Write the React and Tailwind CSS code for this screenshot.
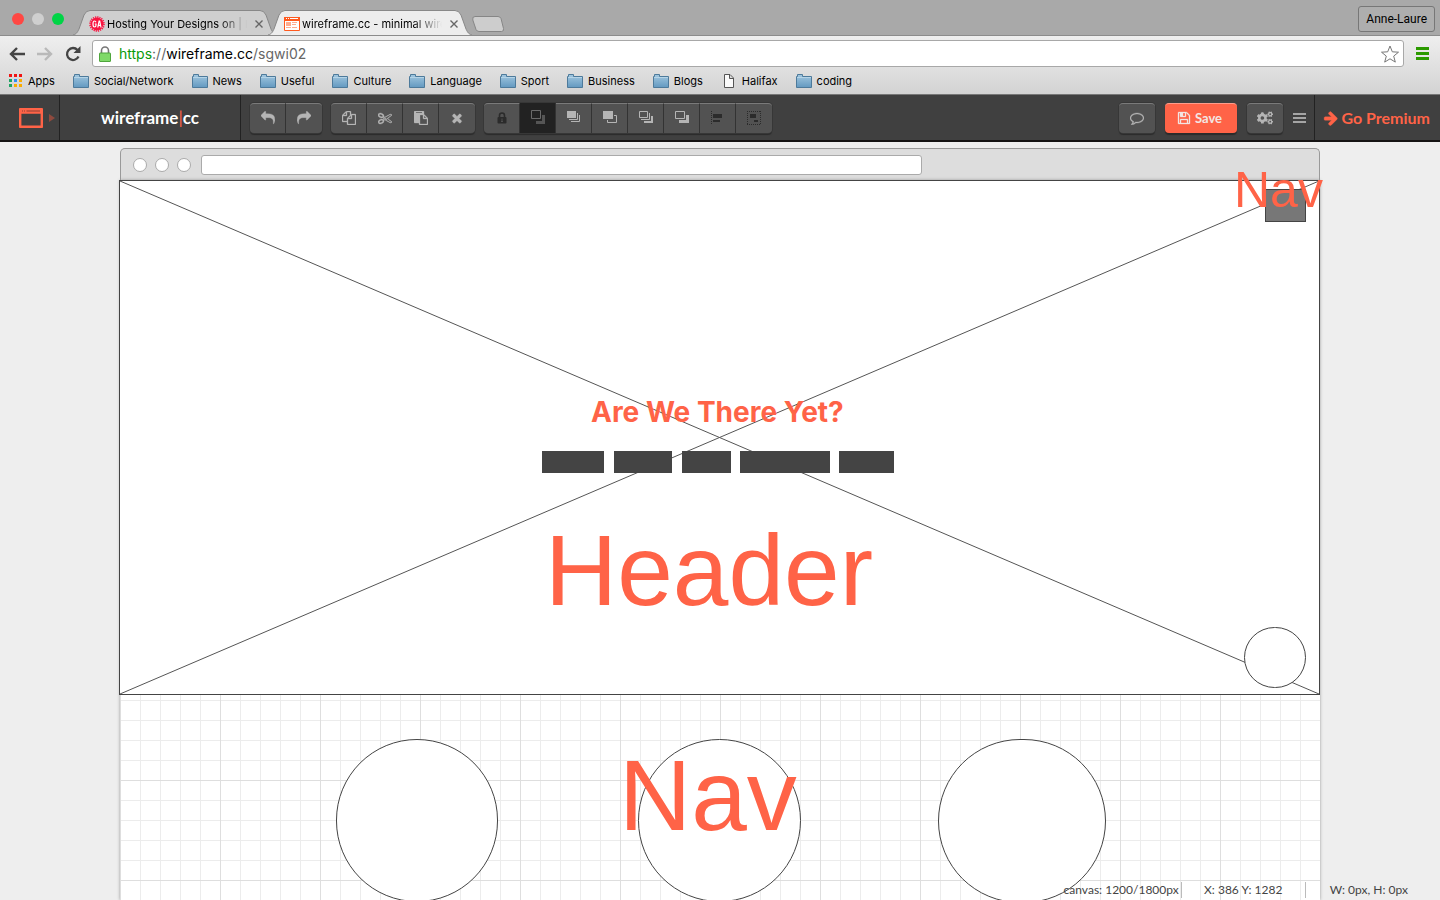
import { FaCogs } from 'react-icons/fa';

const ICONS = {
  reply: 'M1792 1120q0 166-127 451-3 7-10.5 24t-13.5 30-13 22q-12 17-28 17-15 0-23.5-10t-8.5-25q0-9 2.5-26.5t2.5-23.5q5-68 5-123 0-112-19.5-200.5t-54-153.5-89-110-115-74-139-43.5-154.5-20.5-174-5.5h-224v256q0 26-19 45t-45 19-45-19l-512-512q-19-19-19-45t19-45l512-512q19-19 45-19t45 19 19 45v256h224q713 0 875 403 53 134 53 333z',
  arrow: 'M1600 960q0 54-37 91l-651 651q-39 37-91 37-51 0-90-37l-75-75q-38-38-38-91t38-91l293-293h-704q-52 0-84.5-37.5t-32.5-90.5v-128q0-53 32.5-90.5t84.5-37.5h704l-293-294q-38-36-38-90t38-90l75-75q38-38 90-38 53 0 91 38l651 651q37 35 37 90z',
  comment: 'M896 384q-204 0-381.5 69.5t-282 187.5-104.5 255q0 112 71.5 213.5t201.5 175.5l87 50-27 96q-24 91-70 172 152-63 275-171l43-38 57 6q69 8 130 8 204 0 381.5-69.5t282-187.5 104.5-255-104.5-255-282-187.5-381.5-69.5zm896 512q0 174-120 321.5t-326 233-450 85.5q-70 0-145-8-198 175-460 242-49 14-114 22h-5q-15 0-27-10.5t-16-27.5v-1q-3-4-.5-12t2-10 4.5-9.5l6-9 7-8.5 8-9q7-8 31-34.5t34.5-38 31-39.5 32.5-51 27-59 26-76q-157-89-247.5-220t-90.5-281q0-174 120-321.5t326-233 450-85.5 450 85.5 326 233 120 321.5z',
  save: 'M512 1536h768v-384h-768v384zm896 0h128v-896q0-14-10-38.5t-20-34.5l-281-281q-10-10-34-20t-39-10v416q0 40-28 68t-68 28h-576q-40 0-68-28t-28-68v-416h-128v1280h128v-416q0-40 28-68t68-28h832q40 0 68 28t28 68v416zm-384-928v-320q0-13-9.5-22.5t-22.5-9.5h-192q-13 0-22.5 9.5t-9.5 22.5v320q0 13 9.5 22.5t22.5 9.5h192q13 0 22.5-9.5t9.5-22.5zm640 32v928q0 40-28 68t-68 28h-1344q-40 0-68-28t-28-68v-1344q0-40 28-68t68-28h928q40 0 88 20t76 48l280 280q28 28 48 76t20 88z',
  times: 'M1490 1322q0 40-28 68l-136 136q-28 28-68 28t-68-28l-294-294-294 294q-28 28-68 28t-68-28l-136-136q-28-28-28-68t28-68l294-294-294-294q-28-28-28-68t28-68l136-136q28-28 68-28t68 28l294 294 294-294q28-28 68-28t68 28l136 136q28 28 28 68t-28 68l-294 294 294 294q28 28 28 68z',
  copy: 'M1696 384q40 0 68 28t28 68v1216q0 40-28 68t-68 28h-960q-40 0-68-28t-28-68v-288h-544q-40 0-68-28t-28-68v-672q0-40 20-88t48-76l408-408q28-28 76-48t88-20h416q40 0 68 28t28 68v328q68-40 128-40h416zm-544 213l-299 299h299v-299zm-640-384l-299 299h299v-299zm196 647l316-316v-416h-384v416q0 40-28 68t-68 28h-416v640h512v-256q0-40 20-88t48-76zm956 804v-1152h-384v416q0 40-28 68t-68 28h-416v640h896z',
  paste: 'M768 1664h896v-640h-416q-40 0-68-28t-28-68v-416h-384v1152zm256-1440v-64q0-13-9.5-22.5t-22.5-9.5h-704q-13 0-22.5 9.5t-9.5 22.5v64q0 13 9.5 22.5t22.5 9.5h704q13 0 22.5-9.5t9.5-22.5zm256 672h299l-299-299v299zm512 128v672q0 40-28 68t-68 28h-960q-40 0-68-28t-28-68v-160h-544q-40 0-68-28t-28-68v-1344q0-40 28-68t68-28h1088q40 0 68 28t28 68v328q21 13 36 28l408 408q28 28 48 76t20 88z',
  cut: 'M960 896q26 0 45 19t19 45-19 45-45 19-45-19-19-45 19-45 45-19zm300 64l507 398q28 20 25 56-5 35-35 51l-128 64q-13 7-29 7-17 0-31-8l-690-387-110 66q-8 4-12 5 14 49 10 97-7 77-56 147.5t-132 123.5q-132 84-277 84-136 0-222-78-90-84-79-207 7-76 56-147t131-124q132-84 278-84 83 0 151 31 9-13 22-22l122-73-122-73q-13-9-22-22-68 31-151 31-146 0-278-84-82-53-131-124t-56-147q-5-59 15.5-113t63.5-93q85-79 222-79 145 0 277 84 83 52 132 123t56 148q4 48-10 97 4 1 12 5l110 66 690-387q14-8 31-8 16 0 29 7l128 64q30 16 35 51 3 36-25 56zm-681-260q46-42 21-108t-106-117q-92-59-192-59-74 0-113 36-46 42-21 108t106 117q92 59 192 59 74 0 113-36zm-85 745q81-51 106-117t-21-108q-39-36-113-36-100 0-192 59-81 51-106 117t21 108q39 36 113 36 100 0 192-59zm178-613l96 58v-11q0-36 33-56l14-8-79-44-26 26q-3 3-10 11t-12 12q-2 2-4 3.5t-3 2.5zm224 224l96 32 736-576-128-64-768 431v113l-160 96 9 8q2 2 7 6 4 4 11 12t11 12l26 26zm704 416l128-64-520-408-177 138q-2 3-13 7z',
};

function Glyph({ name, className = 'size-3.5' }) {
  return (
    <svg viewBox="0 0 1792 1792" className={className} fill="currentColor" stroke="currentColor" strokeWidth="40" aria-hidden="true">
      <path d={ICONS[name]} />
    </svg>
  );
}

const LAYER_ICONS = {
  select: (
    <>
      <path d="M.5.5h9v8h-9z" fill="none" stroke="#6a6a6a" />
      <path d="M11 5h3v9H5v-3h6z" fill="#555" />
    </>
  ),
  front: (
    <>
      <path d="M0 0h9v7H0z" />
      <path d="M10.500 2v6.500H2M12.500 4v6.500H4" fill="none" stroke="currentColor" />
    </>
  ),
  forward: (
    <>
      <path d="M0 0h10v8H0z" />
      <path d="M11 4.500h2.500v7h-9V9" fill="none" stroke="currentColor" />
    </>
  ),
  backward: (
    <>
      <path d="M.5.5h8v6h-8z" fill="none" stroke="currentColor" />
      <path d="M10.500 2v6.500H2" fill="none" stroke="currentColor" />
      <path d="M12 5h2v7H5v-2h7z" />
    </>
  ),
  back: (
    <>
      <path d="M.5.5h9v7h-9z" fill="none" stroke="currentColor" />
      <path d="M11 4h3v8H4V9h7z" />
    </>
  ),
  align: (
    <>
      <path d="M.5 0v14" fill="none" stroke="currentColor" strokeDasharray="1 1" />
      <path d="M2 3h9v4H2zM2 9h7v2H2z" />
    </>
  ),
  group: (
    <>
      <path d="M.5 0v14M13.500 0v14M0 .5h14M0 13.500h14" fill="none" stroke="currentColor" strokeDasharray="1 1" />
      <path d="M3 3h6v4H3zM7 9h4v2H7z" />
    </>
  ),
};

function LayerIcon({ name }) {
  return (
    <svg viewBox="0 0 14 14" className="size-3.5" fill="currentColor" aria-hidden="true">
      {LAYER_ICONS[name]}
    </svg>
  );
}

function LockIcon() {
  return (
    <svg viewBox="0 0 10 12" className="h-3 w-2.5" aria-hidden="true">
      <path d="M2.500 6V3.500a2.500 2.500 0 0 1 5 0V6" fill="none" stroke="#2b2b2b" strokeWidth="1.600" />
      <rect x=".5" y="5" width="9" height="6.500" rx="1" fill="#2b2b2b" />
      <path d="M5 6.500v3M4 9.500h2" stroke="#4f4f4f" />
    </svg>
  );
}

function Tool({ label, active, dim, children }) {
  return (
    <button
      type="button"
      aria-label={label}
      className={
        'flex h-[30px] w-9 items-center justify-center border-r border-[#333] pb-0.5 first:rounded-l last:rounded-r last:border-r-0 ' +
        (active ? 'bg-[#222] ' : 'border-t border-t-[#7a7a7a] bg-[#525252] ') +
        (dim ? 'text-[#2b2b2b]' : 'text-[#b5b5b5]')
      }
    >
      {children}
    </button>
  );
}

function ToolGroup({ children }) {
  return <div className="flex rounded shadow-[0_0_0_1px_#373737,0_2px_1px_#2b2b2b]">{children}</div>;
}

function Folder() {
  return (
    <svg viewBox="0 0 16 14" className="h-3.5 w-4" aria-hidden="true">
      <defs>
        <linearGradient id="folder" x1="0" y1="0" x2="0" y2="1">
          <stop offset="0" stopColor="#a3c8e0" />
          <stop offset="1" stopColor="#6399c0" />
        </linearGradient>
      </defs>
      <path d="M.5 13.500v-11h1v-2h5v2h9v11z" fill="url(#folder)" stroke="#4d7a9b" />
      <path d="M1 3.500h14" stroke="#c4deee" opacity=".7" />
    </svg>
  );
}

function PageIcon() {
  return (
    <svg viewBox="0 0 16 14" className="h-3.5 w-4" aria-hidden="true">
      <path d="M3.500.5h5.500l3.500 3.500v9.500h-9zM8.500.5v4h4" fill="#fafafa" stroke="#555" />
    </svg>
  );
}

const APP_COLORS = ['#f01414', '#f01414', '#f01414', '#1fa463', '#2f8df4', '#f9ab00', '#1fa463', '#f9ab00', '#f9ab00'];

function AppsIcon() {
  return (
    <svg viewBox="0 0 13 13" className="size-[13px]" aria-hidden="true">
      {APP_COLORS.map((c, i) => (
        <rect key={i} x={(i % 3) * 5} y={Math.floor(i / 3) * 5} width="3" height="3" fill={c} />
      ))}
    </svg>
  );
}

const BOOKMARKS = ['Social/Network', 'News', 'Useful', 'Culture', 'Language', 'Sport', 'Business', 'Blogs', 'Halifax', 'coding'];

function WireFavicon() {
  return (
    <svg viewBox="0 0 16 14" className="h-3.5 w-4 shrink-0" fill="#ff5a1f" aria-hidden="true">
      <path d="M.5.5h15v13H.5z" fill="#fff" stroke="#ff5a1f" />
      <path d="M0 0h16v4H0z" />
      <path d="M2 1h1v1H2zM4 1h1v1H4zM6 1h8v1H6z" fill="#fff" />
      <path d="M2 5h5v4H2zM8 5h5v1H8zM8 7h4v1H8zM2 10h5v1H2zM8 10h5v1H8z" opacity=".5" />
    </svg>
  );
}

function GaFavicon() {
  return (
    <svg viewBox="0 0 16 16" className="size-4 shrink-0" aria-hidden="true">
      <circle cx="8" cy="8" r="6.500" fill="#fa1440" />
      <circle cx="8" cy="8" r="7" fill="none" stroke="#fa1440" strokeWidth="1.600" strokeDasharray="1.200 1" />
      <path d="M7 6.200Q6.500 5 5.500 5 4 5 4 8t1.500 3Q7 11 7 9V8H5.800M8.800 11.500l1.300-6.500h.6l1.300 6.500M9.200 9.300h2.400" fill="none" stroke="#fff" strokeWidth="1.200" />
    </svg>
  );
}

function Tab({ title, icon, active, className }) {
  return (
    <div className={'relative flex h-[25px] w-[204px] items-center pl-4 pr-3 pt-0.5 ' + className}>
      <svg viewBox="0 0 204 25" preserveAspectRatio="none" className="absolute inset-0 size-full" aria-hidden="true">
        <path
          d="M0 25C4 24 5 21 6 19L11 5Q13 .5 17 .5H187Q191 .5 193 5L198 19C199 21 200 24 204 25"
          fill={active ? '#ededed' : '#cfcfcf'}
          stroke="#888"
        />
      </svg>
      <div className="relative flex min-w-0 flex-1 items-center gap-0.5">
        {icon}
        <span className="min-w-0 flex-1 whitespace-nowrap text-[11px] leading-4 text-black [mask-image:linear-gradient(to_right,black_80%,transparent)]">
          {title}
        </span>
        <button type="button" aria-label="Close tab" className="ml-1 flex size-3 items-center justify-center text-[#666]">
          <svg viewBox="0 0 8 8" className="size-2" aria-hidden="true">
            <path d="M.5.5l7 7M7.500.5l-7 7" stroke="currentColor" strokeWidth="1.400" />
          </svg>
        </button>
      </div>
    </div>
  );
}

function BrowserChrome() {
  return (
    <header className="font-[Inter,sans-serif]">
      <div className="flex h-9 items-end justify-between border-b border-[#8c8c8c] bg-[#a9a9a9] pr-[5px]">
        <div className="flex items-end">
          <div className="flex gap-2 self-start pl-3 pt-[3px]">
            <span className="size-3 rounded-full bg-[#ff4743]" />
            <span className="size-3 rounded-full bg-[#cfcfcf]" />
            <span className="size-3 rounded-full bg-[#00d446]" />
          </div>
          <Tab title="Hosting Your Designs on | H" icon={<GaFavicon />} className="ml-[9px]" />
          <Tab title="wireframe.cc - minimal wire" icon={<WireFavicon />} active className="-ml-[9px]" />
          <button type="button" aria-label="New tab" className="mb-[3px]">
            <svg viewBox="0 0 32 16" className="h-4 w-8" aria-hidden="true">
              <path d="M3 .5h23q2 0 3 2l2.500 10q.5 3-2 3H7q-2 0-3-2L.8 4Q0 .5 3 .5z" fill="#cdcdcd" stroke="#868686" />
            </svg>
          </button>
        </div>
        <button
          type="button"
          className="mb-[3px] h-[26px] rounded-[3px] border border-[#777] bg-[#aeaeae] px-[7px] font-[Roboto,sans-serif] text-[12px] leading-4 text-black"
        >
          Anne-Laure
        </button>
      </div>

      <div className="border-b border-[#777] bg-linear-to-b from-[#efefef] to-[#d3d3d3]">
        <div className="flex h-[31px] items-end gap-3 pl-[9px] pr-[11px]">
          <nav className="flex h-[27px] items-center gap-3" aria-label="History">
            <button type="button" aria-label="Back">
              <svg viewBox="0 0 16 14" className="h-3.5 w-4" aria-hidden="true">
                <path d="M8 1L2 7l6 6M2.500 7H16" fill="none" stroke="#444" strokeWidth="2.400" />
              </svg>
            </button>
            <button type="button" aria-label="Forward">
              <svg viewBox="0 0 16 14" className="h-3.5 w-4" aria-hidden="true">
                <path d="M8 1l6 6-6 6M13.500 7H0" fill="none" stroke="#b9b9b9" strokeWidth="2.400" />
              </svg>
            </button>
            <button type="button" aria-label="Reload">
              <svg viewBox="0 0 16 16" className="size-4" aria-hidden="true">
                <path d="M13.500 10.500A6 6 0 1 1 12.500 4" fill="none" stroke="#444" strokeWidth="2.300" />
                <path d="M15.500 0v7h-7z" fill="#444" />
              </svg>
            </button>
          </nav>
          <div className="-ml-px flex h-[27px] min-w-0 flex-1 items-center rounded-[3px] border border-[#a8a8a8] bg-white pl-1.5 pr-1">
            <svg viewBox="0 0 12 16" className="h-4 w-3" aria-hidden="true">
              <path d="M2.500 8V4.500a3.500 3.500 0 0 1 7 0V8" fill="none" stroke="#777" strokeWidth="1.600" />
              <rect x=".5" y="7" width="11" height="8.500" rx=".5" fill="#7fd968" stroke="#4fa53c" />
            </svg>
            <a href="https://wireframe.cc/sgwi02" className="ml-2 flex-1 text-[14px] leading-5 text-[#666]">
              <span className="text-[#0a9a0a]">https</span>://<span className="text-black">wireframe.cc</span>/sgwi02
            </a>
            <button type="button" aria-label="Bookmark this page">
              <svg viewBox="0 0 18 18" className="size-[18px]" aria-hidden="true">
                <path d="M9 1l2.300 5.800 6.200.4-4.800 3.900 1.600 6L9 13.800l-5.300 3.300 1.600-6L.5 7.200l6.200-.4z" fill="#fff" stroke="#777" strokeLinejoin="round" />
              </svg>
            </button>
          </div>
          <button type="button" aria-label="Menu" className="flex h-[27px] flex-col justify-center gap-0.5">
            <span className="h-[3px] w-[13px] bg-[#2b9a00]" />
            <span className="h-[3px] w-[13px] bg-[#2b9a00]" />
            <span className="h-[3px] w-[13px] bg-[#2b9a00]" />
          </button>
        </div>
        <nav className="flex h-[27px] items-center gap-[18px] pl-[9px] text-[11px] leading-4 text-black" aria-label="Bookmarks">
          <a href="#apps" className="flex items-center gap-1.5">
            <AppsIcon />
            Apps
          </a>
          {BOOKMARKS.map((name) => (
            <a key={name} href={'#' + name} className="flex items-center gap-[5px]">
              {name === 'Halifax' ? <PageIcon /> : <Folder />}
              {name}
            </a>
          ))}
        </nav>
      </div>
    </header>
  );
}

function AppBar() {
  return (
    <div className="flex h-[47px] items-stretch border-b-2 border-[#151313] bg-[#404040] font-[Lato,sans-serif]">
      <button type="button" aria-label="Change canvas" className="flex w-[60px] items-center gap-1.5 border-r border-[#222] pl-[19px]">
        <svg viewBox="0 0 24 20" className="h-5 w-6" aria-hidden="true">
          <rect x="1" y="1" width="22" height="18" rx="1.500" fill="none" stroke="#ff6347" strokeWidth="2.800" />
          <path d="M1 3.500h22" stroke="#ff6347" strokeWidth="4.500" />
          <path d="M3 3h1M5 3h1M7.500 3h13.500" stroke="#8a4336" />
        </svg>
        <svg viewBox="0 0 6 8" className="h-2 w-1.5" aria-hidden="true">
          <path d="M0 0l6 4-6 4z" fill="#8f4a3e" />
        </svg>
      </button>
      <a href="#home" className="flex w-[181px] items-center justify-center border-r border-[#222] text-[17px] font-bold leading-6 text-white">
        wireframe<span className="font-normal text-[#ff6347]">|</span>cc
      </a>
      <div className="flex flex-1 items-start gap-[9px] pl-[9px] pt-2">
        <ToolGroup>
          <Tool label="Undo"><Glyph name="reply" /></Tool>
          <Tool label="Redo"><Glyph name="reply" className="size-3.5 -scale-x-100" /></Tool>
        </ToolGroup>
        <ToolGroup>
          <Tool label="Copy"><Glyph name="copy" /></Tool>
          <Tool label="Cut"><Glyph name="cut" /></Tool>
          <Tool label="Paste"><Glyph name="paste" /></Tool>
          <Tool label="Delete"><Glyph name="times" /></Tool>
        </ToolGroup>
        <ToolGroup>
          <Tool label="Lock" dim><LockIcon /></Tool>
          <Tool label="Arrange" active><LayerIcon name="select" /></Tool>
          <Tool label="Bring to front"><LayerIcon name="front" /></Tool>
          <Tool label="Bring forward"><LayerIcon name="forward" /></Tool>
          <Tool label="Send to back"><LayerIcon name="backward" /></Tool>
          <Tool label="Send backward"><LayerIcon name="back" /></Tool>
          <Tool label="Align" dim><LayerIcon name="align" /></Tool>
          <Tool label="Group" dim><LayerIcon name="group" /></Tool>
        </ToolGroup>
      </div>
      <div className="flex items-start gap-2.5 pr-2 pt-2">
        <ToolGroup>
          <Tool label="Comment"><Glyph name="comment" /></Tool>
        </ToolGroup>
        <button
          type="button"
          className="flex h-[30px] w-[72px] items-center justify-center gap-1 rounded border-t border-[#ff9c8a] bg-[#ff6347] pb-0.5 pr-1 text-[13px] font-bold leading-5 text-[#f3e6e3] shadow-[0_2px_1px_#2b2b2b]"
        >
          <Glyph name="save" />
          Save
        </button>
        <ToolGroup>
          <Tool label="Settings"><FaCogs className="size-4" /></Tool>
        </ToolGroup>
        <button type="button" aria-label="More" className="flex h-[30px] flex-col justify-center gap-0.5">
          <span className="h-0.5 w-[13px] bg-[#a5a5a5]" />
          <span className="h-0.5 w-[13px] bg-[#a5a5a5]" />
          <span className="h-0.5 w-[13px] bg-[#a5a5a5]" />
        </button>
      </div>
      <a href="#premium" className="flex items-center gap-0.5 border-l border-[#222] pl-2 pr-2.5 text-[16px] font-bold leading-6 text-[#ff6347]">
        <Glyph name="arrow" className="size-4" />
        Go Premium
      </a>
    </div>
  );
}

const LABEL = 'absolute whitespace-nowrap font-["Liberation_Sans",Arial,sans-serif] text-[#ff6347]';

function Canvas() {
  return (
    <div className="mx-auto flex w-full max-w-[1200px] flex-1 flex-col pt-1.5">
      <div className="flex h-8 shrink-0 items-center gap-2 rounded-t-[5px] border border-b-0 border-[#999] bg-[#ddd] pl-3">
        <span className="size-3.5 rounded-full border border-[#aaa] bg-white" />
        <span className="size-3.5 rounded-full border border-[#aaa] bg-white" />
        <span className="size-3.5 rounded-full border border-[#aaa] bg-white" />
        <span className="ml-0.5 h-5 w-[721px] rounded-[3px] border border-[#aaa] bg-white" />
      </div>
      <div className="relative flex-1 bg-white bg-[linear-gradient(#dedede_1px,transparent_1px),linear-gradient(90deg,#dedede_1px,transparent_1px),linear-gradient(#ececec_1px,transparent_1px),linear-gradient(90deg,#ececec_1px,transparent_1px)] bg-[size:100px_100px,100px_100px,20px_20px,20px_20px] shadow-[0_0_3px_#999]">
        <div className="absolute -left-px top-0 h-[515px] w-[1201px] border border-[#444] bg-white">
          <svg viewBox="0 0 1199 513" preserveAspectRatio="none" className="size-full" aria-hidden="true">
            <path d="M0 0L1199 513M1199 0L0 513" stroke="#555" fill="none" />
          </svg>
        </div>
        <div className="absolute left-[1145px] top-[9px] h-[33px] w-[41px] border border-[#444] bg-[#777]" />
        <div className="absolute left-[1124px] top-[447px] h-[61px] w-[62px] rounded-full border border-[#444] bg-white" />
        <div className={LABEL + ' left-[1114px] -top-[19px] text-[50px] leading-[58px]'}>Nav</div>
        <h1 className="absolute left-[471px] top-[214px] whitespace-nowrap font-[Inter,sans-serif] text-[28px] font-bold leading-9 text-[#ff6347]">
          Are We There Yet?
        </h1>
        <div className="absolute left-[422px] top-[271px] flex h-[22px] gap-[9px]">
          <span className="mr-px w-[62px] bg-[#444]" />
          <span className="mr-px w-[58px] bg-[#444]" />
          <span className="w-[49px] bg-[#444]" />
          <span className="w-[90px] bg-[#444]" />
          <span className="w-[55px] bg-[#444]" />
        </div>
        <div className={LABEL + ' left-[425px] top-[333px] text-[100px] leading-[114px]'}>Header</div>
        <div className="absolute left-[216px] top-[559px] h-[163px] w-[162px] rounded-full border border-[#444] bg-white" />
        <div className="absolute left-[518px] top-[559px] h-[163px] w-[163px] rounded-full border border-[#444] bg-white" />
        <div className="absolute left-[818px] top-[559px] h-[164px] w-[168px] rounded-full border border-[#444] bg-white" />
        <div className={LABEL + ' left-[499px] top-[558px] text-[100px] leading-[114px]'}>Nav</div>
      </div>
    </div>
  );
}

export default function App() {
  return (
    <div className="flex h-screen flex-col overflow-hidden bg-[#eee]">
      <BrowserChrome />
      <AppBar />
      <main className="relative flex flex-1 flex-col">
        <Canvas />
        <footer className="absolute bottom-0 right-0 flex h-[18px] items-start pr-8 font-[Lato,sans-serif] text-[12px] leading-4 text-[#444]">
          <span className="border-r border-[#bbb] pr-0.5">canvas: 1200/1800px</span>
          <span className="w-[124px] border-r border-[#bbb] text-center">X: 386 Y: 1282</span>
          <span className="pl-6">W: 0px, H: 0px</span>
        </footer>
      </main>
    </div>
  );
}
